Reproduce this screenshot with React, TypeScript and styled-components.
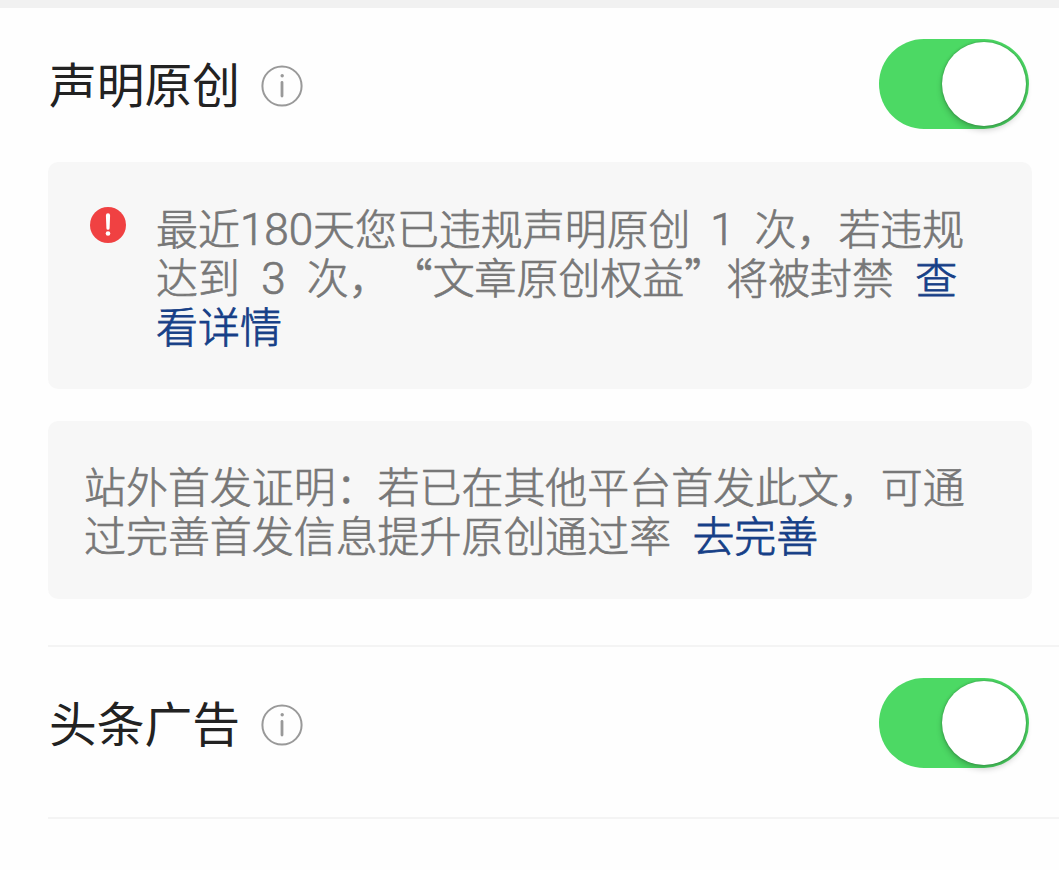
import React from "react";
import styled, { createGlobalStyle } from "styled-components";

export default function App() {
  return (
    <Page lang="zh-CN">
      <GlobalStyle />
      <TopStrip />
      <Section>
        <SettingRow title="声明原创" />
        <Card>
          <AlertIcon />
          <CardText>
            <Line>
              最近<Num>180</Num>天您已违规声明原创 <Num>1</Num> 次，若违规
            </Line>
            <Line $gap={12}>
              达到 <Num>3</Num> 次，“文章原创权益”将被封禁 <Link>查</Link>
            </Line>
            <Line>
              <Link>看详情</Link>
            </Line>
          </CardText>
        </Card>
        <Card $plain>
          <CardText>
            <Line>站外首发证明：若已在其他平台首发此文，可通</Line>
            <Line $gap={12}>
              过完善首发信息提升原创通过率 <Link>去完善</Link>
            </Line>
          </CardText>
        </Card>
      </Section>
      <Section $compact>
        <SettingRow title="头条广告" />
      </Section>
    </Page>
  );
}

function SettingRow({ title }: { title: string }) {
  return (
    <Row>
      <Title>{title}</Title>
      <InfoIcon />
      <Switch type="button" role="switch" aria-checked="true" aria-label={title}>
        <Knob />
      </Switch>
    </Row>
  );
}

function InfoIcon() {
  return (
    <svg width="42" height="42" viewBox="0 0 42 42" fill="none">
      <circle cx="21" cy="21" r="19.6" stroke="#999" strokeWidth="2" />
      <circle cx="21.2" cy="10.8" r="1.7" fill="#999" />
      <path d="M21 17.5V31" stroke="#999" strokeWidth="2.8" strokeLinecap="round" />
    </svg>
  );
}

function AlertIcon() {
  return (
    <AlertSvg width="36" height="36" viewBox="0 0 36 36">
      <circle cx="18" cy="18" r="18" fill="#f04142" />
      <path d="M15.9 8.4a2.1 2.1 0 0 1 4.2 0l-.5 12.8a1.6 1.6 0 0 1-3.2 0z" fill="#fff" />
      <circle cx="18" cy="26.5" r="2.3" fill="#fff" />
    </AlertSvg>
  );
}

const GlobalStyle = createGlobalStyle`
  body {
    margin: 0;
    background: #fefefe;
    font-family: "Noto Sans CJK SC", sans-serif;
  }
`;

const Page = styled.main`
  width: 1059px;
  height: 870px;
  overflow: hidden;
`;

const TopStrip = styled.div`
  height: 8px;
  background: #f1f1f1;
`;

const Section = styled.section<{ $compact?: boolean }>`
  box-sizing: border-box;
  height: ${({ $compact }) => ($compact ? "172px" : "639px")};
  margin-left: 48px;
  padding: 31px 27px 0 0;
  border-bottom: 2px solid #f4f4f4;
`;

const Row = styled.div`
  display: flex;
  align-items: center;
  height: 90px;
  padding: 0 3px 0 1px;

  > svg {
    margin: 4px 0 0 21px;
  }
`;

const Title = styled.h2`
  margin: 0;
  padding-bottom: 2px;
  color: #222;
  font-size: 47.75px;
  font-weight: 400;
  line-height: 88px;
`;

const Switch = styled.button`
  display: flex;
  justify-content: flex-end;
  width: 150px;
  height: 90px;
  margin-left: auto;
  padding: 3px;
  border: 0;
  border-radius: 45px;
  background: #4cd964;
`;

const Knob = styled.span`
  width: 84px;
  height: 84px;
  border-radius: 50%;
  background: #fff;
  box-shadow: 0 4px 6px rgba(0, 0, 0, 0.2), 0 0 3px rgba(0, 0, 0, 0.3);
`;

const Card = styled.div<{ $plain?: boolean }>`
  display: flex;
  box-sizing: border-box;
  height: ${({ $plain }) => ($plain ? "178px" : "227px")};
  margin-top: ${({ $plain }) => ($plain ? "32px" : "33px")};
  padding: ${({ $plain }) => ($plain ? "39px 0 0 36px" : "40px 0 0 42px")};
  border-radius: 10px;
  background: #f7f7f7;
`;

const AlertSvg = styled.svg`
  flex: none;
  margin: 5px 30px 0 0;
`;

const CardText = styled.div`
  color: #777;
  font-size: 41.95px;
  font-weight: 300;
  line-height: 49px;
  text-spacing-trim: space-all;
  -webkit-text-stroke: 0.7px;
`;

const Line = styled.div<{ $gap?: number }>`
  height: 49px;
  white-space: nowrap;
  word-spacing: ${({ $gap = 10.5 }) => $gap}px;
`;

const Num = styled.span`
  font-family: Roboto, sans-serif;
  font-size: 44px;
  line-height: 1;
`;

const Link = styled.a`
  color: #163f87;
  -webkit-text-stroke: 0.8px;
`;
